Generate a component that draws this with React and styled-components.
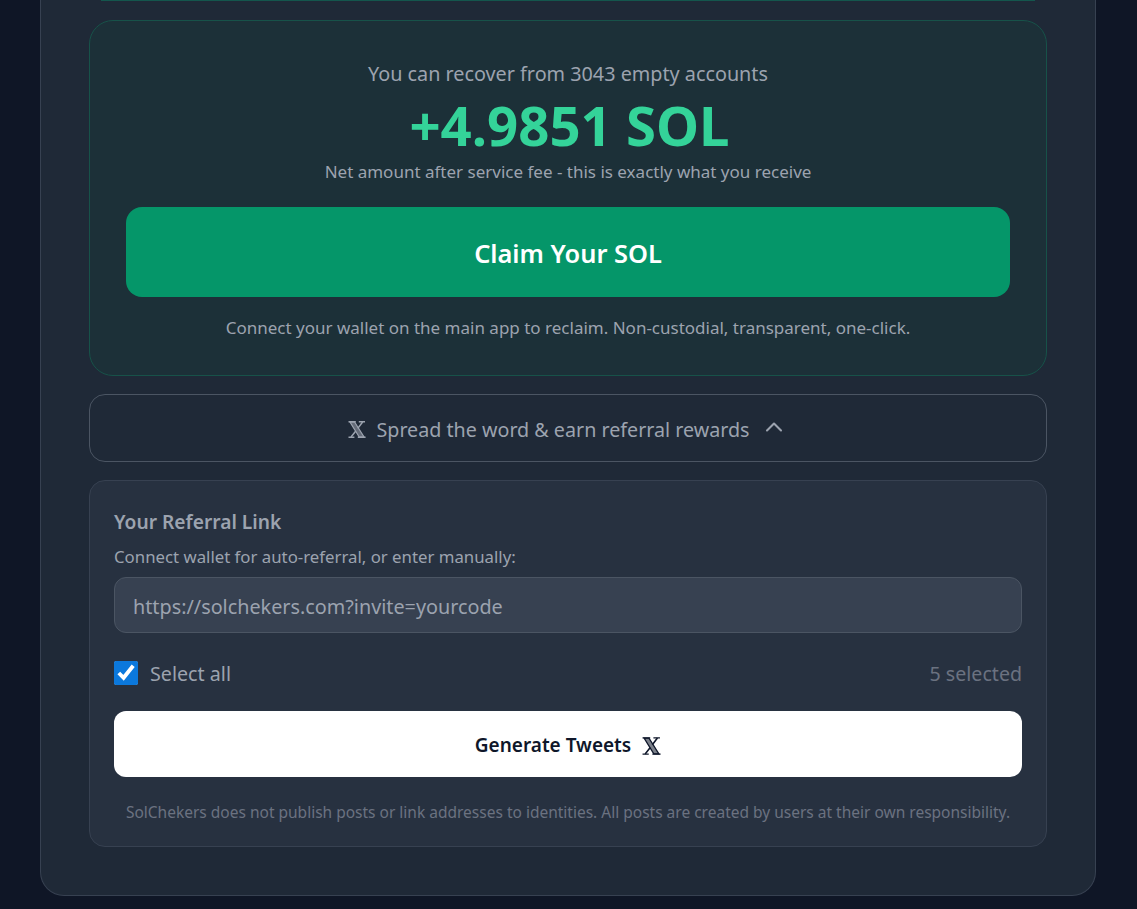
import React from "react";
import styled, { createGlobalStyle } from "styled-components";
import { FiChevronUp } from "react-icons/fi";

const Global = createGlobalStyle`
  html, body {
    margin: 0;
    padding: 0;
    height: 909px;
    overflow: hidden;
    background: #0f1626;
    font-family: "Noto Sans", "Open Sans", sans-serif;
  }
  * { box-sizing: border-box; }
`;

const Page = styled.div`
  height: 909px;
  padding: 0 41px 13px 40px;
  background: #0f1626;
`;

const Panel = styled.div`
  height: 896px;
  padding: 0 48px;
  display: flex;
  flex-direction: column;
  gap: 18px;
  background: #1f2937;
  border: 1px solid #374151;
  border-top: none;
  border-radius: 0 0 24px 24px;
`;

const PrevCardEdge = styled.div`
  height: 1px;
  margin: 0 12px 1px;
  background: #14564d;
`;

const ClaimCard = styled.section`
  height: 356px;
  padding: 40px 36px 0;
  display: flex;
  flex-direction: column;
  align-items: center;
  background: #1c3038;
  border: 1px solid #175249;
  border-radius: 24px;
`;

const Recover = styled.p`
  margin: 0;
  font-size: 19.8px;
  line-height: 26px;
  color: #9ca3af;
`;

const Amount = styled.div`
  margin-top: 8px;
  padding-left: 3px;
  font-size: 54.5px;
  line-height: 60px;
  font-weight: 700;
  color: #34d399;
`;

const Muted = styled.p`
  margin: 5px 0 0;
  font-size: 17px;
  line-height: 24px;
  color: #9ca3af;
`;

const ClaimButton = styled.button`
  width: 100%;
  height: 90px;
  flex: none;
  margin: 23px 0 14px;
  padding-top: 2px;
  border: none;
  border-radius: 16px;
  background: #059669;
  color: #fff;
  font: 600 25.4px "Noto Sans", sans-serif;
`;

const ShareToggle = styled.button`
  height: 68px;
  padding: 0;
  display: flex;
  align-items: center;
  justify-content: center;
  gap: 10px;
  background: transparent;
  border: 1px solid #4b5563;
  border-radius: 16px;
  color: #9ca3af;
  font: 400 19.7px "Noto Sans", sans-serif;
  > svg:last-child {
    width: 28px;
    height: 28px;
    stroke-width: 1.8;
    margin: -3px 0 0 0;
  }
`;

const ShareLabel = styled.span`
  padding-top: 3px;
`;

const XIcon = styled.svg`
  width: ${(p) => p.$size}px;
  height: ${(p) => p.$size - 1}px;
  flex: none;
  margin-top: ${(p) => p.$top}px;
`;

function XMark({ size, top }) {
  return (
    <XIcon $size={size} $top={top} viewBox="0 0 18 17" fill="none" stroke="currentColor">
      <path d="M2 1 L6.6 1 L16 16 L11.2 16 Z" fill="currentColor" fillOpacity="0.55" strokeWidth="1.2" />
      <path d="M14.6 1 L9.8 7.4 M7.8 10 L3 16" strokeWidth="1.5" />
      <path d="M0.5 0.8 H7.8 M10.8 0.8 H17 M0.5 16.2 H6.4 M9.8 16.2 H17.6" strokeWidth="1.4" />
    </XIcon>
  );
}

const ReferralCard = styled.section`
  height: 367px;
  padding: 24px 24px 0;
  display: flex;
  flex-direction: column;
  background: #273140;
  border: 1px solid #374151;
  border-radius: 16px;
  > * {
    flex: none;
  }
`;

const CardTitle = styled.h3`
  margin: 2px 0 0;
  font-size: 19.2px;
  line-height: 30px;
  font-weight: 600;
  color: #9ca3af;
`;

const FieldLabel = styled.label`
  margin-top: 9px;
  font-size: 16.8px;
  line-height: 22px;
  color: #9ca3af;
`;

const LinkInput = styled.input`
  height: 56px;
  margin-top: 9px;
  padding: 3px 18px 0;
  background: #374151;
  border: 1px solid #4b5563;
  border-radius: 12px;
  color: #e5e7eb;
  font: 400 19.8px "Noto Sans", sans-serif;
  &::placeholder {
    color: #9ca3af;
  }
`;

const SelectRow = styled.div`
  height: 24px;
  margin-top: 28px;
  display: flex;
  align-items: center;
  justify-content: space-between;
`;

const SelectAll = styled.label`
  display: flex;
  align-items: center;
  gap: 12px;
  font-size: 19.7px;
  color: #9ca3af;
`;

const Check = styled.input`
  width: 24px;
  height: 24px;
  margin: 0;
  accent-color: #0b78dc;
`;

const Count = styled.span`
  font-size: 19.6px;
  color: #6b7280;
`;

const GenerateButton = styled.button`
  height: 66px;
  margin-top: 26px;
  padding: 0;
  display: flex;
  align-items: center;
  justify-content: center;
  gap: 11px;
  background: #fff;
  border: none;
  border-radius: 12px;
  color: #0f172a;
  font: 600 19px "Noto Sans", sans-serif;
`;

const GenerateLabel = styled.span`
  padding-top: 2px;
`;

const Disclaimer = styled.p`
  margin: 24px 0 0;
  font-size: 15.5px;
  line-height: 22px;
  text-align: center;
  color: #6b7280;
`;

export default function App() {
  return (
    <Page>
      <Global />
      <Panel>
        <PrevCardEdge />
        <ClaimCard>
          <Recover>You can recover from 3043 empty accounts</Recover>
          <Amount>+4.9851 SOL</Amount>
          <Muted>Net amount after service fee - this is exactly what you receive</Muted>
          <ClaimButton>Claim Your SOL</ClaimButton>
          <Muted>Connect your wallet on the main app to reclaim. Non-custodial, transparent, one-click.</Muted>
        </ClaimCard>
        <ShareToggle>
          <XMark size={18} top={2} />
          <ShareLabel>Spread the word &amp; earn referral rewards</ShareLabel>
          <FiChevronUp />
        </ShareToggle>
        <ReferralCard>
          <CardTitle>Your Referral Link</CardTitle>
          <FieldLabel>Connect wallet for auto-referral, or enter manually:</FieldLabel>
          <LinkInput placeholder="https://solchekers.com?invite=yourcode" readOnly />
          <SelectRow>
            <SelectAll>
              <Check type="checkbox" defaultChecked />
              Select all
            </SelectAll>
            <Count>5 selected</Count>
          </SelectRow>
          <GenerateButton>
            <GenerateLabel>Generate Tweets</GenerateLabel>
            <XMark size={19} top={3} />
          </GenerateButton>
          <Disclaimer>
            SolChekers does not publish posts or link addresses to identities. All posts are created by users at their own responsibility.
          </Disclaimer>
        </ReferralCard>
      </Panel>
    </Page>
  );
}
